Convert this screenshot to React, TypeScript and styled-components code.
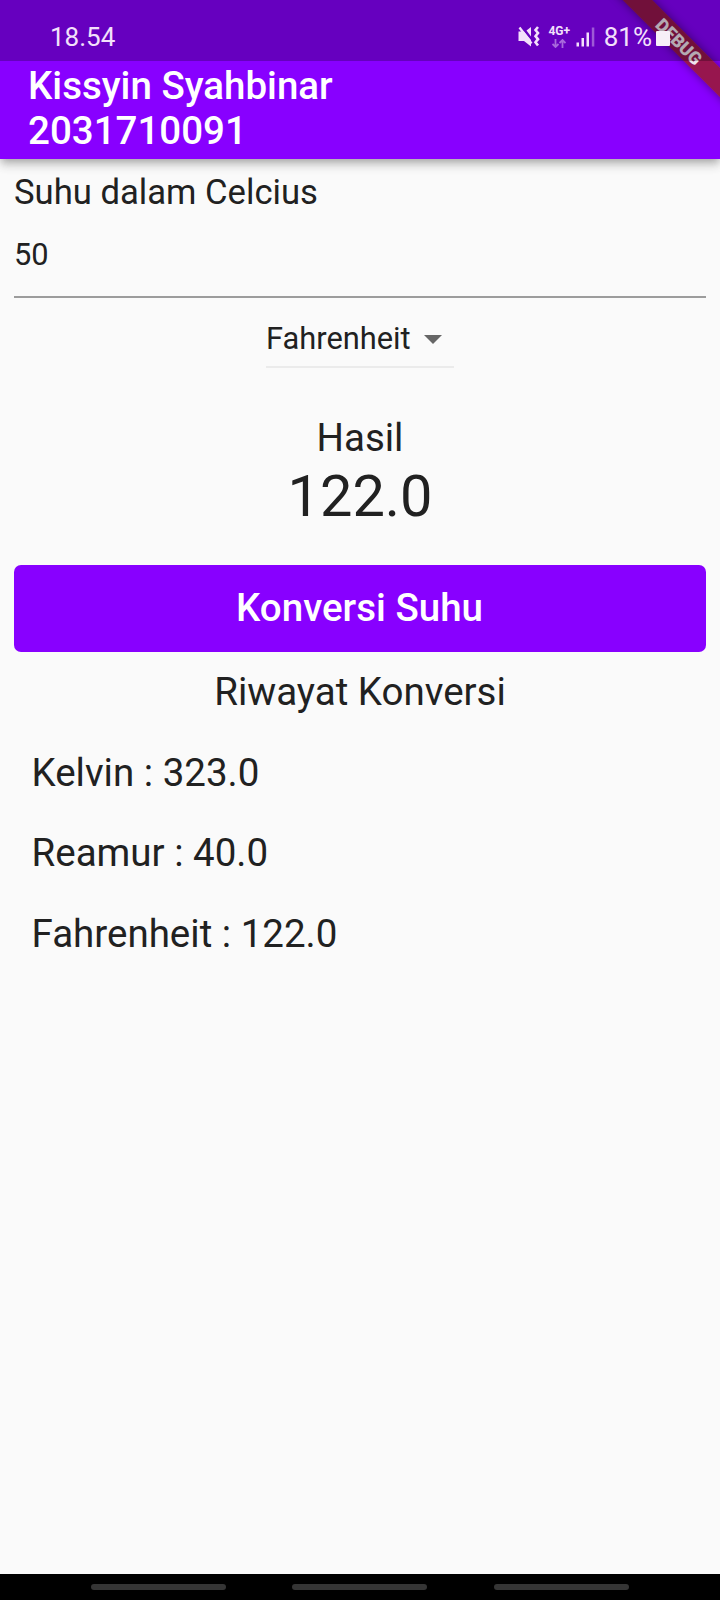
import React from "react";
import styled, { createGlobalStyle } from "styled-components";

const GlobalStyle = createGlobalStyle`
  * { box-sizing: border-box; }
  body { margin: 0; background: #fafafa; }
`;

const Screen = styled.div`
  display: flex;
  flex-direction: column;
  width: 720px;
  height: 1600px;
  overflow: hidden;
  background: #fafafa;
  color: #212121;
  font-family: Roboto, "Liberation Sans", sans-serif;
`;

const Header = styled.header`
  position: relative;
  flex: none;
  height: 158.5px;
  background: #8800ff;
  box-shadow: 0 3.5px 7px -1.5px rgba(0, 0, 0, 0.2), 0 7px 9px rgba(0, 0, 0, 0.12),
    0 2px 14px rgba(0, 0, 0, 0.1);
`;

const StatusBar = styled.div`
  position: relative;
  z-index: 2;
  display: flex;
  align-items: center;
  height: 60.5px;
  padding: 13.5px 50px 0 50px;
  background: rgba(0, 0, 0, 0.25);
  color: #f3e0fb;
`;

const Clock = styled.span`
  flex: 1;
  font-size: 26px;
  line-height: 30px;
`;

const Indicators = styled.div`
  display: flex;
  align-items: center;
`;

const MuteIcon = styled.svg`
  width: 23px;
  height: 23px;
  margin: -2px 7px 0 0;
`;

const Network = styled.div`
  display: flex;
  flex-direction: column;
  align-items: center;
  width: 22px;
  margin-right: 5.5px;
`;

const NetworkLabel = styled.span`
  font-size: 12px;
  font-weight: 700;
  line-height: 11px;
`;

const Arrows = styled.svg`
  width: 14px;
  height: 9px;
  margin-top: 2px;
`;

const Signal = styled.svg`
  width: 20px;
  height: 22px;
  margin-right: 8px;
`;

const Percent = styled.span`
  font-size: 26px;
  line-height: 30px;
  margin-right: 4px;
`;

const Battery = styled.span`
  width: 14px;
  height: 15px;
  margin-top: 3px;
  border-radius: 1px;
  background: #f7f0f8;
`;

const RibbonClip = styled.div`
  position: absolute;
  z-index: 1;
  top: 0;
  right: 0;
  width: 120px;
  height: 120px;
  overflow: hidden;
`;

const Ribbon = styled.div`
  position: absolute;
  top: 31px;
  left: -11px;
  width: 180px;
  height: 21px;
  background: rgba(155, 28, 34, 0.8);
  box-shadow: 0 0 10px rgba(0, 0, 0, 0.42);
  color: #f0e3ee;
  font-size: 17.85px;
  font-weight: 900;
  line-height: 21px;
  text-align: center;
  transform: rotate(45deg);
`;

const Title = styled.h1`
  margin: 0;
  padding: 2.5px 0 0 28px;
  color: #fff;
  font-size: 38.5px;
  font-weight: 500;
  line-height: 45px;
`;

const Content = styled.main`
  flex: 1;
  display: flex;
  flex-direction: column;
  align-items: center;
  padding: 12.5px 14px 0;
`;

const FieldLabel = styled.label`
  align-self: stretch;
  font-size: 34.65px;
  line-height: 42px;
`;

const Field = styled.div`
  align-self: stretch;
  height: 85px;
  padding-top: 24px;
  border-bottom: 2px solid #9c9c9c;
  font-size: 30.8px;
  line-height: 36px;
`;

const Dropdown = styled.div`
  display: flex;
  justify-content: space-between;
  width: 188px;
  height: 47px;
  margin-top: 23px;
  padding-right: 12.5px;
  border-bottom: 2px solid #ebebeb;
  font-size: 30.8px;
  line-height: 36px;
`;

const Caret = styled.svg`
  width: 18px;
  height: 9px;
  margin-top: 14px;
`;

const Caption = styled.div<{ $gap: number }>`
  margin-top: ${(p) => p.$gap}px;
  font-size: 38.5px;
  line-height: 46px;
`;

const Result = styled.div`
  font-size: 57.75px;
  line-height: 70px;
`;

const ConvertButton = styled.button`
  align-self: stretch;
  height: 87px;
  margin-top: 33.5px;
  padding: 0 1px 2px 0;
  border: 0;
  border-radius: 7px;
  background: #8800ff;
  color: #fff;
  font: 500 38.5px Roboto, "Liberation Sans", sans-serif;
`;

const History = styled.ul`
  align-self: stretch;
  margin: 18px 0 0;
  padding: 0 0 0 17.5px;
  list-style: none;
`;

const HistoryItem = styled.li`
  height: 80.75px;
  font-size: 38.5px;
  line-height: 80.6px;
`;

const NavigationBar = styled.nav`
  flex: none;
  display: flex;
  justify-content: center;
  gap: 66.5px;
  height: 26.5px;
  padding: 10px 1px 0 0;
  background: #000;
`;

const NavHint = styled.span`
  width: 135px;
  height: 6px;
  border-radius: 3px;
  background: #353535;
`;

const history = ["Kelvin : 323.0", "Reamur : 40.0", "Fahrenheit : 122.0"];

export default function App() {
  return (
    <Screen>
      <GlobalStyle />
      <Header>
        <StatusBar>
          <Clock>18.54</Clock>
          <Indicators>
            <MuteIcon viewBox="0 0 23 23" fill="none" stroke="currentColor">
              <path d="M.5 6.5H6L13 15V21.5L6 16H.5z" fill="currentColor" stroke="none" />
              <path d="M8.5 5.5L13 2v9.5z" fill="currentColor" stroke="none" />
              <path d="M1.5 2.5L13.5 18.5" strokeWidth="2.4" />
              <path d="M20 2L17.5 5L20 8L17.5 11.2L20 14.2L17.5 17.2L20 20.5" strokeWidth="2.6" />
            </MuteIcon>
            <Network>
              <NetworkLabel>4G+</NetworkLabel>
              <Arrows viewBox="0 0 14 9" fill="none" stroke="#a869dc" strokeWidth="1.8">
                <path d="M3.5 0v8M.5 5l3 3 3-3M10.5 9V1M7.5 4l3-3 3 3" />
              </Arrows>
            </Network>
            <Signal viewBox="0 0 20 22" fill="currentColor">
              <path d="M.5 16.5H3v4H.5zM5.5 12H8v8.5H5.5zM10.5 6.5H13v14h-2.5z" />
              <path d="M15.8 1.5h2.5v19h-2.5z" opacity="0.4" />
            </Signal>
            <Percent>81%</Percent>
            <Battery />
          </Indicators>
        </StatusBar>
        <Title>
          Kissyin Syahbinar
          <br />
          2031710091
        </Title>
        <RibbonClip>
          <Ribbon>DEBUG</Ribbon>
        </RibbonClip>
      </Header>
      <Content>
        <FieldLabel>Suhu dalam Celcius</FieldLabel>
        <Field>50</Field>
        <Dropdown>
          Fahrenheit
          <Caret viewBox="0 0 18 9">
            <path d="M0 0h18L9 9z" fill="#666" />
          </Caret>
        </Dropdown>
        <Caption $gap={47}>Hasil</Caption>
        <Result>122.0</Result>
        <ConvertButton>Konversi Suhu</ConvertButton>
        <Caption $gap={17}>Riwayat Konversi</Caption>
        <History>
          {history.map((entry) => (
            <HistoryItem key={entry}>{entry}</HistoryItem>
          ))}
        </History>
      </Content>
      <NavigationBar>
        <NavHint />
        <NavHint />
        <NavHint />
      </NavigationBar>
    </Screen>
  );
}
